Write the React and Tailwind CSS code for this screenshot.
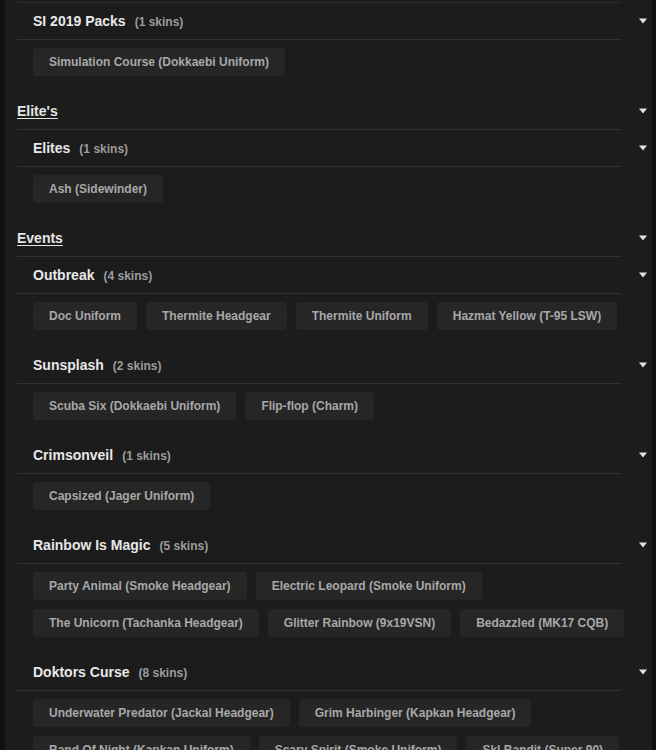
import React from "react";

const Arrow = () => (
  <svg width="8" height="6" viewBox="0 0 8 6" className="block">
    <path d="M0 0.5 H8 L4 5.5 Z" fill="#e2e2e2" />
  </svg>
);

const Row = ({ children }) => (
  <div className="flex h-[37px]">
    <div className="flex-1 h-full border-b border-[#313131] flex items-center">{children}</div>
    <div className="w-[31px] flex items-center justify-end pr-[5px] pb-[1px]">
      <Arrow />
    </div>
  </div>
);

const Category = ({ title }) => (
  <Row>
    <span className="text-[14px] font-bold text-[#e4e4e4] underline underline-offset-2 leading-none">{title}</span>
  </Row>
);

const Sub = ({ title, skins }) => (
  <div>
    <Row>
      <div className="pl-4 flex items-baseline">
        <span className="text-[14px] font-bold text-[#e8e8e8] leading-none">{title}</span>
        <span className="ml-[9px] text-[12px] font-bold text-[#9c9c9c] leading-none">({skins.length} skins)</span>
      </div>
    </Row>
    <div className="pl-4 pr-[20px] pt-[8px] pb-[17px] flex flex-wrap gap-[9px]">
      {skins.map((s) => (
        <div
          key={s}
          className="h-[28px] px-4 flex items-center rounded-[3px] bg-[#262627] text-[12px] font-bold text-[#a8a8a8] whitespace-nowrap"
        >
          {s}
        </div>
      ))}
    </div>
  </div>
);

export default function App() {
  return (
    <div className="min-h-screen bg-[#101010] flex font-['Liberation_Sans',Arial,sans-serif]">
      <div className="ml-[5px] w-[647px] h-[750px] overflow-hidden bg-[#1c1c1c] pl-[12px]">
        <div className="h-[3px] mr-[31px] border-b border-[#2c2c2c]" />
        <Sub title="SI 2019 Packs" skins={["Simulation Course (Dokkaebi Uniform)"]} />
        <Category title="Elite's" />
        <Sub title="Elites" skins={["Ash (Sidewinder)"]} />
        <Category title="Events" />
        <Sub
          title="Outbreak"
          skins={["Doc Uniform", "Thermite Headgear", "Thermite Uniform", "Hazmat Yellow (T-95 LSW)"]}
        />
        <Sub title="Sunsplash" skins={["Scuba Six (Dokkaebi Uniform)", "Flip-flop (Charm)"]} />
        <Sub title="Crimsonveil" skins={["Capsized (Jager Uniform)"]} />
        <Sub
          title="Rainbow Is Magic"
          skins={[
            "Party Animal (Smoke Headgear)",
            "Electric Leopard (Smoke Uniform)",
            "The Unicorn (Tachanka Headgear)",
            "Glitter Rainbow (9x19VSN)",
            "Bedazzled (MK17 CQB)",
          ]}
        />
        <Sub
          title="Doktors Curse"
          skins={[
            "Underwater Predator (Jackal Headgear)",
            "Grim Harbinger (Kapkan Headgear)",
            "Band Of Night (Kapkan Uniform)",
            "Scary Spirit (Smoke Uniform)",
            "Skl Bandit (Super 90)",
            "Doktor Smoke (Smoke Headgear)",
            "Ghoul (Jackal Uniform)",
            "Dead Man (Charm)",
          ]}
        />
      </div>
    </div>
  );
}
